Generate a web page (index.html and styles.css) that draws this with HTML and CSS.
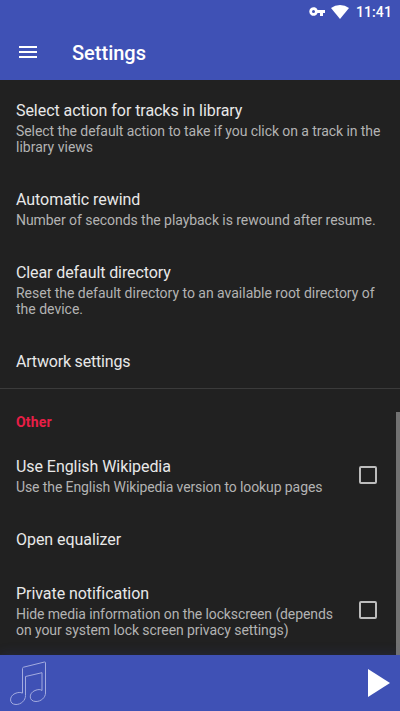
FILE: index.html
```html
<!DOCTYPE html>
<html lang="en">
<head>
<meta charset="utf-8">
<title>Settings</title>
<link rel="stylesheet" href="styles.css">
</head>
<body>
<div class="screen">
  <header class="top">
    <div class="status">
      <svg class="key" width="16" height="9" viewBox="0 0 16 9"><path fill="#fff" fill-rule="evenodd" d="M8.6 3A4.3 4.3 0 1 0 8.6 6H11V9H14V6H16V3ZM4.5 6A1.5 1.5 0 1 1 4.5 3A1.5 1.5 0 0 1 4.5 6Z"/></svg>
      <svg class="wifi" width="18" height="14" viewBox="0 0 18 14"><path fill="#fff" d="M0 3Q4 0 9 0T18 3L9 14Z"/></svg>
      <span class="clock">11:41</span>
    </div>
    <div class="toolbar">
      <svg class="menu" width="18" height="12" viewBox="0 0 18 12"><path fill="#fff" d="M0 0H18V2H0ZM0 5H18V7H0ZM0 10H18V12H0Z"/></svg>
      <h1>Settings</h1>
    </div>
  </header>
  <main class="list">
    <div class="item"><div class="title snug">Select action for tracks in library</div><div class="summary"><span class="snug-2">Select the default action to take if you click on a track in the</span><br>library views</div></div>
    <div class="item"><div class="title snug">Automatic rewind</div><div class="summary snug">Number of seconds the playback is rewound after resume.</div></div>
    <div class="item"><div class="title snug-3">Clear default directory</div><div class="summary"><span class="snug-1">Reset the default directory to an available root directory of</span><br>the device.</div></div>
    <div class="item"><div class="title snug-4">Artwork settings</div></div>
    <h2 class="category">Other</h2>
    <div class="item row"><div><div class="title snug">Use English Wikipedia</div><div class="summary snug-3">Use the English Wikipedia version to lookup pages</div></div><span class="checkbox"></span></div>
    <div class="item"><div class="title snug">Open equalizer</div></div>
    <div class="item row"><div><div class="title snug">Private notification</div><div class="summary"><span class="snug-3">Hide media information on the lockscreen (depends</span><br><span class="snug-2">on your system lock screen privacy settings)</span></div></div><span class="checkbox"></span></div>
    <div class="scrollbar"></div>
  </main>
  <footer class="player">
    <svg class="note" width="38" height="46" viewBox="0 0 38 46"><path fill="none" stroke="#a3abdf" stroke-width="1" d="M12.500 33V8.500Q12.500 7.500 13.500 7.200L34.500 2Q35.500 1.800 35.500 2.800V33C35.500 37.500 31 41.500 26 41.500C18.500 41.500 18.500 33 25 30.500C28 29.300 30.500 29.200 32 30.500V12.700L15.500 16.500V35.500C15.500 40.500 11 44.500 6 44.500C-1.200 44.500-1 36 5 33.500C8 32.300 10.500 32 12.500 33.200"/></svg>
    <svg class="play" width="22" height="28" viewBox="0 0 22 28"><path fill="#fff" d="M0 0L22 14L0 28Z"/></svg>
  </footer>
</div>
</body>
</html>
```
FILE: styles.css
```css
* { box-sizing: border-box; }
body { margin: 0; background: #212121; font-family: Roboto, sans-serif; }
.screen { width: 400px; height: 711px; display: flex; flex-direction: column; overflow: hidden; }
.top { height: 80px; flex: none; background: #3f51b5; color: #fff; }
.status { height: 24px; display: flex; align-items: center; justify-content: flex-end; padding-right: 8px; }
.key { margin-top: -1px; }
.wifi { margin: 0 7px 0 6px; }
.clock { font-size: 14px; font-weight: 500; line-height: 24px; letter-spacing: .12px; }
.toolbar { height: 56px; display: flex; align-items: center; padding: 0 0 0 19px; }
h1 { margin: 2px 0 0 35px; font-size: 20px; font-weight: 500; line-height: 24px; }
.list { position: relative; flex: 1; min-height: 0; overflow: hidden; padding-top: 4px; background: #212121; }
.item { padding: 16px; }
.row { display: flex; align-items: flex-start; justify-content: space-between; padding-right: 23px; }
.title { color: #e8e8e8; font-size: 16px; line-height: 22px; white-space: nowrap; }
.summary { margin-top: 1px; padding-bottom: 2px; color: #b3b3b3; font-size: 14px; line-height: 16px; white-space: nowrap; }
.snug-1 { letter-spacing: -.017px; }
.snug { letter-spacing: -.055px; }
.snug-2 { letter-spacing: -.07px; }
.snug-3 { letter-spacing: -.1px; }
.snug-4 { letter-spacing: -.19px; }
.category { height: 52px; margin: -1px 0 0; padding: 25px 16px 0; border-top: 1px solid #3b3b3b; color: #e91e46; font-size: 14px; font-weight: 700; line-height: 16px; letter-spacing: .15px; }
.checkbox { width: 18px; height: 18px; flex: none; align-self: center; margin-bottom: 4px; border: 2px solid #bcbcbc; border-radius: 2px; }
.scrollbar { position: absolute; top: 332px; right: 0; bottom: 0; width: 4px; background: #727272; }
.player { height: 56px; flex: none; display: flex; align-items: center; justify-content: space-between; padding: 0 10px; background: #3f51b5; box-shadow: 0 0 12px rgba(63, 81, 181, .2); position: relative; }
```
